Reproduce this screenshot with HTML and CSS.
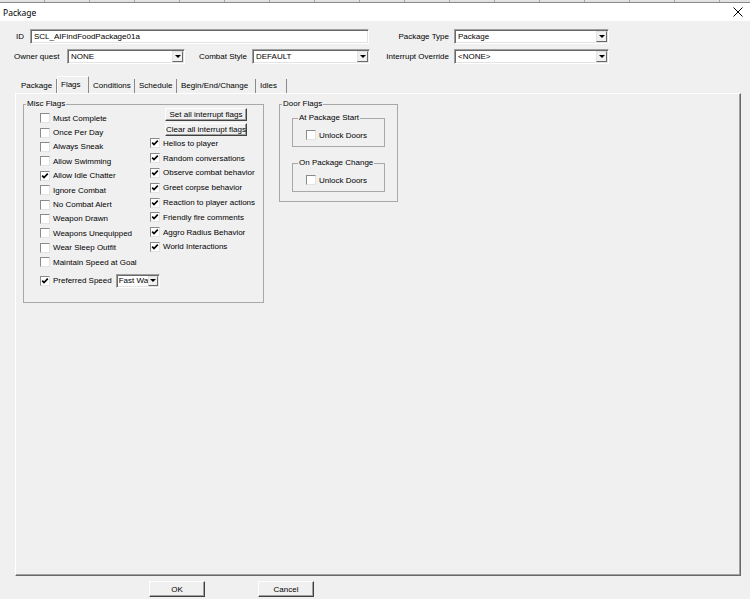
FILE: index.html
```html
<!DOCTYPE html>
<html lang="en">
<head>
    <meta charset="UTF-8">
    <title>Package</title>
    <link rel="stylesheet" href="styles.css">
</head>
<body>
    <div class="strip"></div>
    <div class="titlebar">
        <span class="title">Package</span>
        <svg class="close" width="10" height="10" viewBox="0 0 10 10"><path d="M0.5 0.5 L9.5 9.5 M9.5 0.5 L0.5 9.5" stroke="#000" stroke-width="1"/></svg>
    </div>

    <div class="dialog">
        <!-- Header fields -->
        <div class="fields">
            <div class="row row-first">
                <label class="lbl lbl-id">ID</label>
                <div class="edit w-id">SCL_AIFindFoodPackage01a</div>
                <label class="lbl lbl-right w-85">Package Type</label>
                <div class="combo w-wide"><span class="val">Package</span><span class="arrow"></span></div>
            </div>
            <div class="row row-second">
                <label class="lbl lbl-quest">Owner quest</label>
                <div class="combo w-mid"><span class="val">NONE</span><span class="arrow"></span></div>
                <label class="lbl lbl-right w-67">Combat Style</label>
                <div class="combo w-mid"><span class="val">DEFAULT</span><span class="arrow"></span></div>
                <label class="lbl lbl-right w-84">Interrupt Override</label>
                <div class="combo w-wide"><span class="val">&lt;NONE&gt;</span><span class="arrow"></span></div>
            </div>
        </div>

        <!-- Tabs -->
        <div class="tabs">
            <div class="tab t-package">Package</div>
            <div class="tab t-flags active">Flags</div>
            <div class="tab t-conditions">Conditions</div>
            <div class="tab t-schedule">Schedule</div>
            <div class="tab t-begin">Begin/End/Change</div>
            <div class="tab t-idles">Idles</div>
        </div>

        <div class="panel">
            <fieldset class="group misc">
                <legend>Misc Flags</legend>
                <div class="misc-body">
                    <div class="col-left">
                        <div class="check"><span class="box"></span>Must Complete</div>
                        <div class="check"><span class="box"></span>Once Per Day</div>
                        <div class="check"><span class="box"></span>Always Sneak</div>
                        <div class="check"><span class="box"></span>Allow Swimming</div>
                        <div class="check"><span class="box on"><svg viewBox="0 0 8 8"><path d="M1.2 3.6 L3 5.6 L6.8 1.6" fill="none" stroke="#000" stroke-width="1.6"/></svg></span>Allow Idle Chatter</div>
                        <div class="check"><span class="box"></span>Ignore Combat</div>
                        <div class="check"><span class="box"></span>No Combat Alert</div>
                        <div class="check"><span class="box"></span>Weapon Drawn</div>
                        <div class="check"><span class="box"></span>Weapons Unequipped</div>
                        <div class="check"><span class="box"></span>Wear Sleep Outfit</div>
                        <div class="check"><span class="box"></span>Maintain Speed at Goal</div>
                        <div class="check speed-row"><span class="box on"><svg viewBox="0 0 8 8"><path d="M1.2 3.6 L3 5.6 L6.8 1.6" fill="none" stroke="#000" stroke-width="1.6"/></svg></span>Preferred Speed
                            <div class="combo speed"><span class="val">Fast Wa</span><span class="arrow"></span></div>
                        </div>
                    </div>
                    <div class="col-right">
                        <button class="btn btn-small">Set all interrupt flags</button>
                        <button class="btn btn-small">Clear all interrupt flags</button>
                        <div class="check"><span class="box on"><svg viewBox="0 0 8 8"><path d="M1.2 3.6 L3 5.6 L6.8 1.6" fill="none" stroke="#000" stroke-width="1.6"/></svg></span>Hellos to player</div>
                        <div class="check"><span class="box on"><svg viewBox="0 0 8 8"><path d="M1.2 3.6 L3 5.6 L6.8 1.6" fill="none" stroke="#000" stroke-width="1.6"/></svg></span>Random conversations</div>
                        <div class="check"><span class="box on"><svg viewBox="0 0 8 8"><path d="M1.2 3.6 L3 5.6 L6.8 1.6" fill="none" stroke="#000" stroke-width="1.6"/></svg></span>Observe combat behavior</div>
                        <div class="check"><span class="box on"><svg viewBox="0 0 8 8"><path d="M1.2 3.6 L3 5.6 L6.8 1.6" fill="none" stroke="#000" stroke-width="1.6"/></svg></span>Greet corpse behavior</div>
                        <div class="check"><span class="box on"><svg viewBox="0 0 8 8"><path d="M1.2 3.6 L3 5.6 L6.8 1.6" fill="none" stroke="#000" stroke-width="1.6"/></svg></span>Reaction to player actions</div>
                        <div class="check"><span class="box on"><svg viewBox="0 0 8 8"><path d="M1.2 3.6 L3 5.6 L6.8 1.6" fill="none" stroke="#000" stroke-width="1.6"/></svg></span>Friendly fire comments</div>
                        <div class="check"><span class="box on"><svg viewBox="0 0 8 8"><path d="M1.2 3.6 L3 5.6 L6.8 1.6" fill="none" stroke="#000" stroke-width="1.6"/></svg></span>Aggro Radius Behavior</div>
                        <div class="check"><span class="box on"><svg viewBox="0 0 8 8"><path d="M1.2 3.6 L3 5.6 L6.8 1.6" fill="none" stroke="#000" stroke-width="1.6"/></svg></span>World Interactions</div>
                    </div>
                </div>
            </fieldset>

            <fieldset class="group door">
                <legend>Door Flags</legend>
                <div class="door-body">
                    <fieldset class="group sub">
                        <legend>At Package Start</legend>
                        <div class="sub-body">
                            <div class="check"><span class="box"></span>Unlock Doors</div>
                        </div>
                    </fieldset>
                    <fieldset class="group sub">
                        <legend>On Package Change</legend>
                        <div class="sub-body">
                            <div class="check"><span class="box"></span>Unlock Doors</div>
                        </div>
                    </fieldset>
                </div>
            </fieldset>
        </div>

        <!-- Dialog buttons -->
        <div class="actions">
            <button class="btn btn-main">OK</button>
            <button class="btn btn-main btn-cancel">Cancel</button>
        </div>
    </div>
</body>
</html>
```

FILE: styles.css
```css
* {
    box-sizing: border-box;
}

body {
    margin: 0;
    width: 750px;
    height: 599px;
    overflow: hidden;
    font-family: "Liberation Sans", Arial, sans-serif;
    font-size: 8px;
    color: #000;
    background-color: #f0f0f0;
}

/* list header peeking above the dialog */
.strip {
    height: 3px;
    background: repeating-linear-gradient(to right, #e2e2e2 0 44px, #a8a8a8 44px 45px);
    border-bottom: 1px solid #8a8a8a;
}

.titlebar {
    height: 18px;
    background-color: #fff;
    display: flex;
    align-items: center;
    justify-content: space-between;
    padding: 0 7px 0 3px;
}

.title {
    font-family: "Noto Sans", sans-serif;
    font-size: 8.5px;
}

.dialog {
    height: 578px;
    padding-top: 8px;
}

/* header rows */
.row {
    display: flex;
    align-items: center;
    height: 15px;
}

.row-first {
    padding-left: 16px;
}

.row-second {
    padding-left: 14px;
    margin-top: 5px;
}

.lbl {
    flex: none;
    white-space: nowrap;
    line-height: 15px;
}

.lbl-id { width: 14px; }
.lbl-quest { width: 53px; }

.lbl-right {
    text-align: right;
    padding-right: 5px;
}

.w-85 { width: 85px; }
.w-84 { width: 84px; }
.w-67 { width: 67px; }

.edit,
.combo {
    flex: none;
    height: 15px;
    background-color: #fff;
    border: 1px solid;
    border-color: #a0a0a0 #fff #fff #a0a0a0;
    box-shadow: inset 1px 1px 0 #696969, inset -1px -1px 0 #e3e3e3;
    padding-left: 3px;
    display: flex;
    align-items: center;
    white-space: nowrap;
}

.w-id { width: 339px; }
.w-mid { width: 118px; }
.w-wide { width: 155px; }

.combo .val {
    flex: 1;
    overflow: hidden;
}

.arrow {
    flex: none;
    width: 11px;
    height: 11px;
    margin-right: 1px;
    background-color: #f0f0f0;
    border: 1px solid;
    border-color: #e3e3e3 #696969 #696969 #e3e3e3;
    display: flex;
    align-items: center;
    justify-content: center;
}

.arrow::after {
    content: "";
    border-left: 3px solid transparent;
    border-right: 3px solid transparent;
    border-top: 3px solid #000;
}

/* tabs */
.tabs {
    display: flex;
    align-items: flex-end;
    height: 17px;
    margin: 12px 0 0 17px;
}

.tab {
    height: 14px;
    line-height: 14px;
    padding-left: 4px;
    white-space: nowrap;
    border-right: 1px solid #8a8a8a;
}

.tab.active {
    height: 17px;
    line-height: 16px;
    border-top: 1px solid #fff;
    border-left: 1px solid #fff;
    padding-left: 3px;
}

.t-package { width: 40px; }
.t-flags { width: 32px; }
.t-conditions { width: 46px; }
.t-schedule { width: 42px; }
.t-begin { width: 79px; }
.t-idles { width: 31px; }

.panel {
    margin-left: 15px;
    width: 726px;
    height: 483px;
    border: 1px solid;
    border-color: #fff #696969 #696969 #fff;
    box-shadow: inset -1px -1px 0 #a0a0a0;
    padding: 5px 0 0 7px;
    display: flex;
    align-items: flex-start;
}

/* group boxes */
.group {
    margin: 0;
    padding: 0;
    min-width: 0;
    border: 1px solid #a8a8a8;
}

.group legend {
    padding: 0 1px;
    margin-left: 2px;
    line-height: 10px;
}

.misc {
    width: 241px;
}

.misc-body {
    display: flex;
    padding: 0 0 13px 16px;
}

.col-left {
    width: 110px;
    margin-top: 2px;
}

.col-right {
    margin-top: -1px;
}

.check {
    display: flex;
    align-items: center;
    height: 14.4px;
    white-space: nowrap;
}

.col-right .check {
    height: 14.8px;
}

.box {
    flex: none;
    width: 10px;
    height: 10px;
    margin-right: 3px;
    background-color: #fff;
    border: 1px solid;
    border-color: #8a8a8a #e3e3e3 #e3e3e3 #8a8a8a;
    display: flex;
}

.box svg {
    width: 8px;
    height: 8px;
}

.speed-row {
    margin-top: 3.5px;
    height: 16px;
}

.combo.speed {
    width: 44px;
    height: 14px;
    margin-left: 4px;
    padding-left: 2px;
}

.combo.speed .arrow {
    width: 10px;
    height: 10px;
}

.btn {
    font: inherit;
    color: #000;
    padding: 0;
    background-color: #f0f0f0;
    border: 1px solid;
    border-color: #fff #404040 #404040 #fff;
    box-shadow: inset -1px -1px 0 #a0a0a0;
    display: flex;
    align-items: center;
    justify-content: center;
    white-space: nowrap;
}

.btn-small {
    width: 82px;
    height: 13px;
    margin-left: 15px;
}

.btn-small + .btn-small {
    margin-top: 2px;
}

.door {
    width: 119px;
    margin-left: 15px;
}

.door-body {
    padding: 4px 12px 9px 12px;
}

.sub {
    width: 93px;
}

.sub legend {
    margin-left: 5px;
}

.sub + .sub {
    margin-top: 11px;
}

.sub-body {
    padding: 5px 0 4px 13px;
}

.sub-body .check {
    height: 14px;
}

/* OK / Cancel */
.actions {
    display: flex;
    padding-left: 149px;
    margin-top: 5px;
}

.btn-main {
    width: 56px;
    height: 16px;
}

.btn-cancel {
    margin-left: 53px;
}
```
